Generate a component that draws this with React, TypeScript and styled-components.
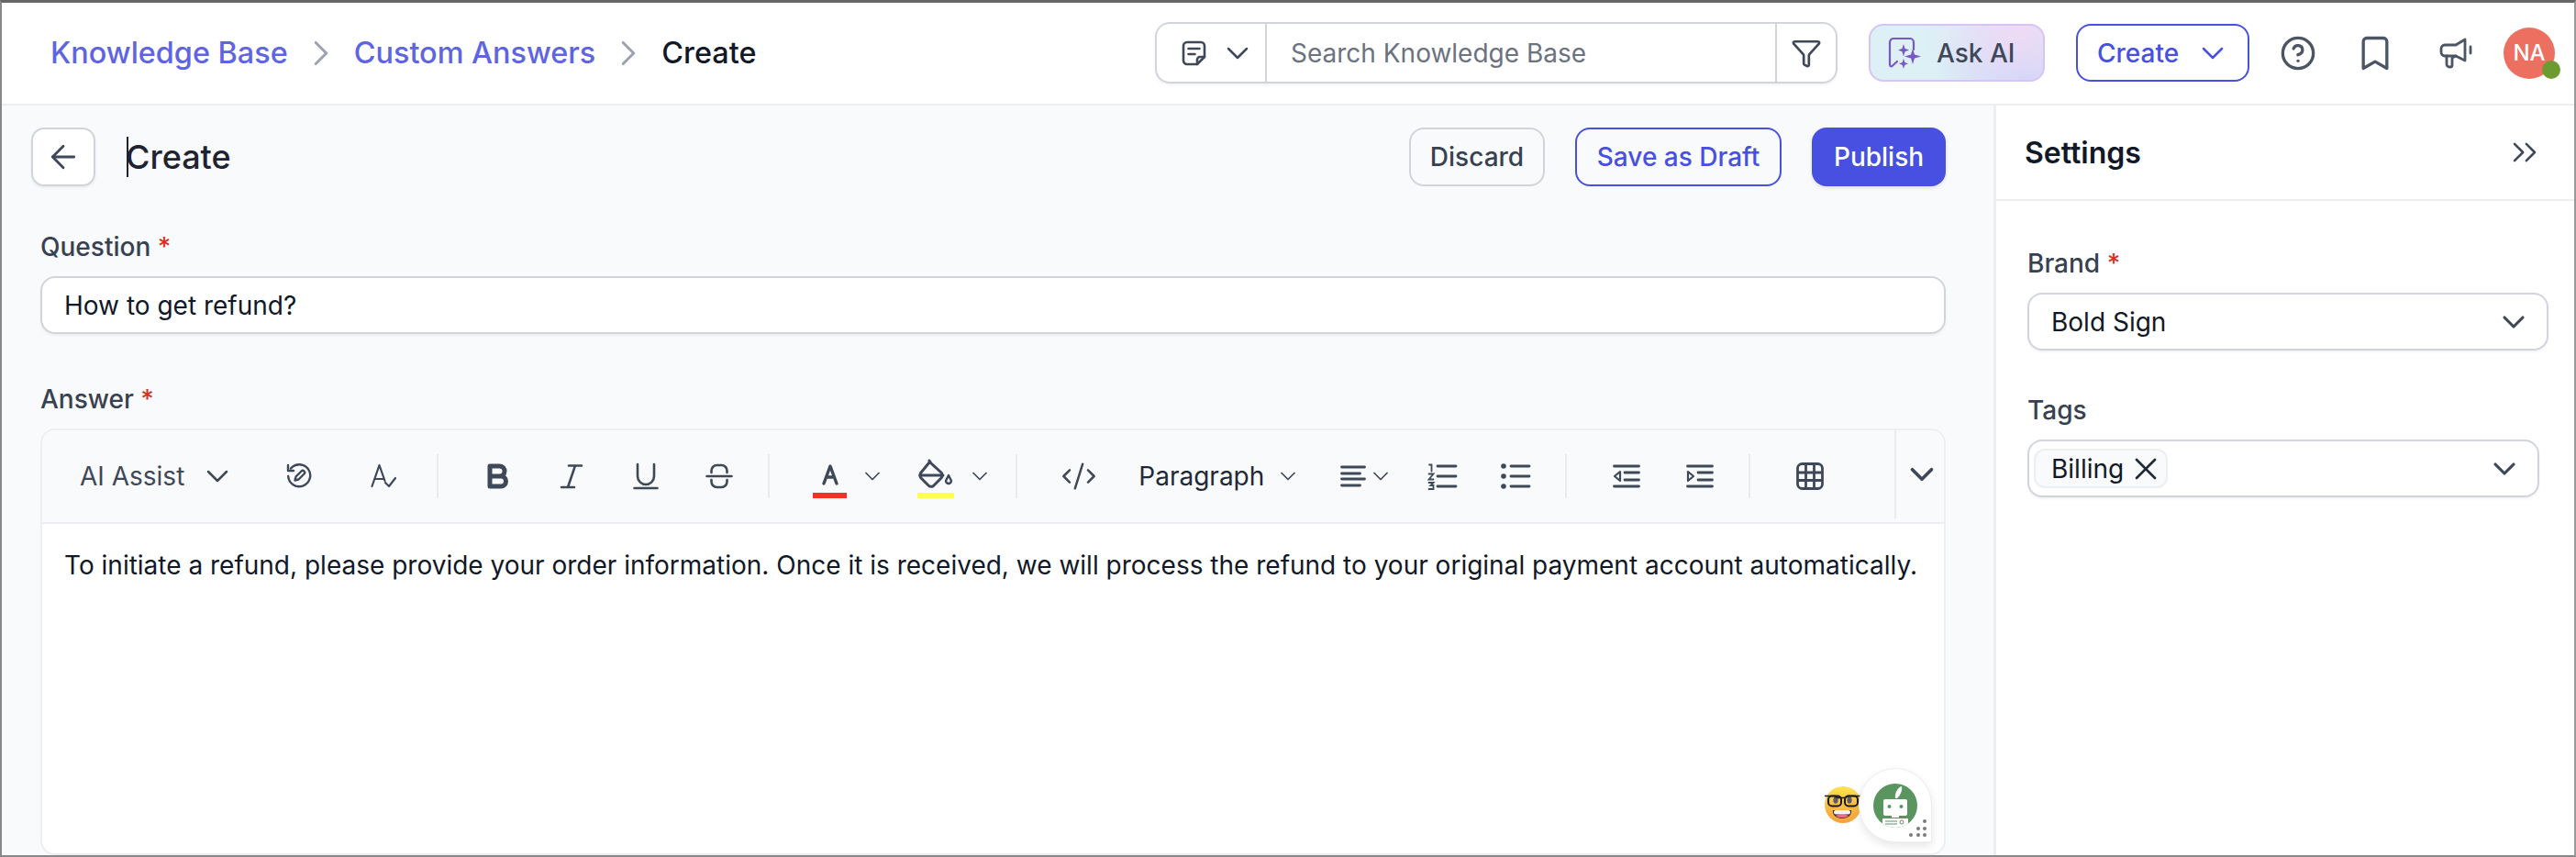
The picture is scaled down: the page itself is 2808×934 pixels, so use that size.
import styled, { createGlobalStyle } from 'styled-components';
import { ArrowLeft, ChevronDown, ChevronRight, ChevronsRight, CircleHelp, Bookmark, Funnel, X, CodeXml } from 'lucide-react';

const INK = '#3f4859';

const GlobalStyle = createGlobalStyle`
  html, body {
    margin: 0;
    padding: 0;
    width: 2808px;
    height: 934px;
    overflow: hidden;
    background: #fff;
    font-family: Inter, "Noto Sans", sans-serif;
    color: #111827;
  }
  * { box-sizing: border-box; }
`;

function NoteIcon() {
  return (
    <svg width="27" height="28" viewBox="0 0 27 28" fill="none" stroke={INK} strokeWidth="2.6" strokeLinecap="round" strokeLinejoin="round">
      <path d="M17 26H6a4 4 0 0 1-4-4V6a4 4 0 0 1 4-4h15a4 4 0 0 1 4 4v12z" />
      <path d="M25 18h-5a3 3 0 0 0-3 3v5" />
      <path d="M7.5 9h12M7.5 15h7" />
    </svg>
  );
}

function AskAiIcon() {
  return (
    <svg width="36" height="36" viewBox="0 0 36 36" fill="none" stroke="#7a57c8" strokeWidth="2.2" strokeLinecap="round" strokeLinejoin="round">
      <path d="M10 27l-5.500 5a1.500 1.500 0 0 1-2.500-1V6a4 4 0 0 1 4-4h18a4 4 0 0 1 4 4v8" />
      <path fill="#7a57c8" stroke="none" d="M17 8l1.600 5 4.400 1.600-4.400 1.600-1.600 5-1.600-5-4.400-1.600 4.400-1.600z" />
      <path fill="#7a57c8" stroke="none" d="M27 13l2 6.500 7 2-7 2-2 6.500-2-6.500-7-2 7-2z" />
      <path fill="#7a57c8" stroke="none" d="M17 24l1.400 4 3.600 1.400-3.600 1.400-1.400 4-1.400-4-3.600-1.400 3.600-1.400z" />
    </svg>
  );
}

function MegaphoneIcon() {
  return (
    <svg width="36" height="34" viewBox="0 0 36 34" fill="none" stroke="#4b5563" strokeWidth="2.8" strokeLinecap="round" strokeLinejoin="round">
      <path d="M6 8h12l10-6v23l-10-5H6a4 4 0 0 1-4-4v-4a4 4 0 0 1 4-4z" />
      <path d="M8 20v9a3 3 0 0 0 3 3h1a2 2 0 0 0 2-2v-8l4-2" />
      <path d="M34 10v7" />
    </svg>
  );
}

function HistoryIcon() {
  return (
    <svg width="28" height="28" viewBox="0 0 28 28" fill="none" stroke={INK} strokeWidth="2.4" strokeLinecap="round" strokeLinejoin="round">
      <path d="M5 5.500A12 12 0 1 1 2.200 14" />
      <path d="M2 2v6h6" />
      <path d="M9.500 18.500l1-4 6-6a2 2 0 0 1 3 3l-6 6z" />
    </svg>
  );
}

function SpellIcon() {
  return (
    <svg width="28" height="28" viewBox="0 0 28 28" fill="none" stroke={INK} strokeWidth="2.200" strokeLinecap="round" strokeLinejoin="round">
      <path d="M1.500 25L9.500 2l6 17M4.500 17h9" />
      <path d="M16 21l4 4 7-9" />
    </svg>
  );
}

function BoldIcon() {
  return (
    <svg width="26" height="28" viewBox="0 0 26 28" fill="none" stroke={INK} strokeWidth="5" strokeLinejoin="round">
      <path d="M3 3h10.500a5.500 5.500 0 0 1 0 11H3zM3 14h12a5.500 5.500 0 0 1 0 11H3z" />
    </svg>
  );
}

function ItalicIcon() {
  return (
    <svg width="26" height="28" viewBox="0 0 26 28" fill="none" stroke={INK} strokeWidth="2.600" strokeLinecap="round">
      <path d="M10 2.500h14M2 26h14M17 2.500L9 26" />
    </svg>
  );
}

function UnderlineIcon() {
  return (
    <svg width="28" height="30" viewBox="0 0 28 30" fill="none" stroke={INK} strokeWidth="2.600" strokeLinecap="round">
      <path d="M5 2v13a9 9 0 0 0 18 0V2" />
      <path d="M1.500 28h25" />
    </svg>
  );
}

function StrikeIcon() {
  return (
    <svg width="30" height="28" viewBox="0 0 30 28" fill="none" stroke={INK} strokeWidth="2.600" strokeLinecap="round">
      <path d="M6.500 10V8a6 6 0 0 1 6-6h5a6 6 0 0 1 6 6v2" />
      <path d="M1.500 14h27" />
      <path d="M6.500 18v2a6 6 0 0 0 6 6h5a6 6 0 0 0 6-6v-2" />
    </svg>
  );
}

function FontColorIcon() {
  return (
    <svg width="28" height="32" viewBox="0 0 28 32" fill="none" stroke={INK} strokeWidth="3.400" strokeLinecap="round" strokeLinejoin="round">
      <path d="M7 27L14 8l7 19M9.500 20h9" />
    </svg>
  );
}

function BucketIcon() {
  return (
    <svg width="38" height="32" viewBox="0 0 38 32" fill="none" stroke={INK} strokeWidth="3" strokeLinecap="round" strokeLinejoin="round">
      <path d="M12 2l2 3 11 10a5 5 0 0 1 0 6l-8 8a4 4 0 0 1-6 0l-8-8a5 5 0 0 1 0-6l9-11" />
      <path d="M2 18h25" />
      <path d="M33 18l3 6a3 3 0 0 1-6 0z" strokeWidth="2.400" />
    </svg>
  );
}

function AlignIcon() {
  return (
    <svg width="28" height="28" viewBox="0 0 28 28" fill="none" stroke={INK} strokeWidth="2.800" strokeLinecap="round">
      <path d="M1.500 4h25M1.500 11h20M1.500 17h25M1.500 24h20" />
    </svg>
  );
}

function NumberedIcon() {
  return (
    <svg width="33" height="30" viewBox="0 0 33 30" fill="none" stroke={INK} strokeLinecap="round">
      <path d="M11 4h20M11 15h20M11 26h20" strokeWidth="2.800" />
      <path d="M2 2.500h2.500v7M1.500 12.500h5l-5 6h5M1.500 22h5l-3 3h3v4h-5" strokeWidth="1.800" />
    </svg>
  );
}

function BulletIcon() {
  return (
    <svg width="33" height="30" viewBox="0 0 33 30" fill="none" stroke={INK} strokeLinecap="round">
      <path d="M11 4h20M11 15h20M11 26h20" strokeWidth="2.800" />
      <circle cx="3" cy="4" r="2.800" fill={INK} stroke="none" />
      <circle cx="3" cy="15" r="2.800" fill={INK} stroke="none" />
      <circle cx="3" cy="26" r="2.800" fill={INK} stroke="none" />
    </svg>
  );
}

function OutdentIcon() {
  return (
    <svg width="30" height="30" viewBox="0 0 30 30" fill="none" stroke={INK} strokeWidth="2.800" strokeLinecap="round" strokeLinejoin="round">
      <path d="M1.500 4h27M13 11h15.500M13 19h15.500M1.500 26h27" />
      <path d="M8 10l-6 5 6 5z" strokeWidth="2.200" />
    </svg>
  );
}

function IndentIcon() {
  return (
    <svg width="30" height="30" viewBox="0 0 30 30" fill="none" stroke={INK} strokeWidth="2.800" strokeLinecap="round" strokeLinejoin="round">
      <path d="M1.500 4h27M13 11h15.500M13 19h15.500M1.500 26h27" />
      <path d="M2 10l6 5-6 5z" strokeWidth="2.200" />
    </svg>
  );
}

function TableIcon() {
  return (
    <svg width="30" height="30" viewBox="0 0 30 30" fill="none" stroke={INK} strokeWidth="2.800" strokeLinejoin="round">
      <rect x="1.500" y="1.500" width="27" height="27" rx="5" />
      <path d="M1.500 11h27M1.500 19.500h27M10.500 1.500v27M19.500 1.500v27" />
    </svg>
  );
}

function NerdEmoji() {
  return (
    <svg width="42" height="42" viewBox="0 0 42 42">
      <defs>
        <linearGradient id="nerdFace" x1="0" y1="0" x2="0" y2="1">
          <stop offset="0" stopColor="#fde24f" />
          <stop offset="1" stopColor="#f3a13a" />
        </linearGradient>
      </defs>
      <circle cx="21" cy="21" r="20" fill="url(#nerdFace)" />
      <ellipse cx="13" cy="16" rx="2.600" ry="3.800" fill="#5c5a66" />
      <ellipse cx="28" cy="16" rx="2.600" ry="3.800" fill="#5c5a66" />
      <path d="M1 11.500h11l3 2h8l4-2h13" fill="none" stroke="#1c1a1a" strokeWidth="1.600" />
      <rect x="5" y="11.500" width="14" height="11" rx="4" fill="none" stroke="#1c1a1a" strokeWidth="2" />
      <rect x="23" y="11.500" width="14" height="11" rx="4" fill="none" stroke="#1c1a1a" strokeWidth="2" />
      <path d="M10 27h20c1 5-4 9-10 9s-11-4-10-9z" fill="#3d2422" />
      <path d="M13 33c3-2 11-2 14 0-3 3-11 3-14 0z" fill="#ef6b85" />
      <rect x="11" y="27" width="18" height="4.500" rx="2" fill="#f1f3f5" />
    </svg>
  );
}

function RobotAvatar() {
  return (
    <svg width="48" height="48" viewBox="0 0 48 48">
      <defs>
        <clipPath id="robotClip">
          <circle cx="24" cy="24" r="24" />
        </clipPath>
      </defs>
      <g clipPath="url(#robotClip)">
        <rect width="48" height="48" fill="#5a9560" />
        <path d="M24 16c-1-6 3-12 7-13 1 5-2 10-5 13z" fill="#fff" />
        <rect x="11" y="17" width="26" height="18" rx="2" fill="#fff" />
        <circle cx="17.500" cy="25" r="2" fill="#5a9560" />
        <circle cx="30.500" cy="25" r="2" fill="#5a9560" />
        <rect x="20" y="35" width="8" height="2" fill="#fff" />
        <rect x="10" y="38" width="28" height="12" fill="#fff" />
        <path d="M13 41h13M13 44h13" stroke="#5a9560" strokeWidth="1" />
        <circle cx="31" cy="42" r="2" fill="none" stroke="#5a9560" strokeWidth="1" />
      </g>
    </svg>
  );
}

export default function App() {
  return (
    <>
      <GlobalStyle />
      <Page>
        <TopBar>
          <Breadcrumb>
            <CrumbLink>Knowledge Base</CrumbLink>
            <CrumbSep><ChevronRight size={46} strokeWidth={1.6} /></CrumbSep>
            <CrumbLink>Custom Answers</CrumbLink>
            <CrumbSep><ChevronRight size={46} strokeWidth={1.6} /></CrumbSep>
            <CrumbCurrent>Create</CrumbCurrent>
          </Breadcrumb>

          <SearchBox>
            <SearchScope>
              <NoteIcon />
              <ChevronDown size={40} strokeWidth={1.5} color={INK} />
            </SearchScope>
            <SearchText>Search Knowledge Base</SearchText>
            <SearchFilter><Funnel size={34} strokeWidth={1.9} color={INK} /></SearchFilter>
          </SearchBox>

          <AskAiButton>
            <AskAiIcon />
            Ask AI
          </AskAiButton>
          <CreateButton>
            Create
            <ChevronDown size={40} strokeWidth={1.5} />
          </CreateButton>

          <TopIcon $ml={33}><CircleHelp size={40} strokeWidth={2} color="#4b5563" /></TopIcon>
          <TopIcon $ml={42}><Bookmark size={44} strokeWidth={1.8} color="#4b5563" /></TopIcon>
          <TopIcon $ml={48}><MegaphoneIcon /></TopIcon>
          <Avatar>
            NA
            <StatusDot />
          </Avatar>
        </TopBar>

        <Body>
          <Main>
            <TitleRow>
              <BackButton><ArrowLeft size={40} strokeWidth={1.7} color={INK} /></BackButton>
              <TitleText>Create</TitleText>
              <Actions>
                <GhostButton>Discard</GhostButton>
                <OutlineButton>Save as Draft</OutlineButton>
                <PrimaryButton>Publish</PrimaryButton>
              </Actions>
            </TitleRow>

            <Form>
              <FieldLabel $top={50}>Question <Required>*</Required></FieldLabel>
              <TextInput>How to get refund?</TextInput>
              <FieldLabel $top={55}>Answer <Required>*</Required></FieldLabel>

              <Editor>
                <Toolbar>
                  <Tool $ml={41}>
                    <ToolLabel>AI Assist</ToolLabel>
                    <ChevronMark $ml={16}><ChevronDown size={40} strokeWidth={1.5} color={INK} /></ChevronMark>
                  </Tool>
                  <Tool $ml={55}><HistoryIcon /></Tool>
                  <Tool $ml={64}><SpellIcon /></Tool>
                  <ToolDivider $ml={44} />
                  <Tool $ml={53}><BoldIcon /></Tool>
                  <Tool $ml={53}><ItalicIcon /></Tool>
                  <Tool $ml={53.5}><UnderlineIcon /></Tool>
                  <Tool $ml={51}><StrikeIcon /></Tool>
                  <ToolDivider $ml={38} />
                  <Tool $ml={47.5}>
                    <ColorStack>
                      <FontColorIcon />
                      <Swatch $color="#ef3224" $width={37} />
                    </ColorStack>
                    <ChevronMark $ml={14}><ChevronDown size={28} strokeWidth={1.5} color={INK} /></ChevronMark>
                  </Tool>
                  <Tool $ml={35}>
                    <ColorStack>
                      <BucketIcon />
                      <Swatch $color="#ffff4d" $width={40} />
                    </ColorStack>
                    <ChevronMark $ml={13.5}><ChevronDown size={28} strokeWidth={1.5} color={INK} /></ChevronMark>
                  </Tool>
                  <ToolDivider $ml={25.5} />
                  <Tool $ml={46.5}><CodeXml size={40} strokeWidth={1.5} color={INK} /></Tool>
                  <Tool $ml={45.5}>
                    <ToolLabel $dark>Paragraph</ToolLabel>
                    <ChevronMark $ml={12}><ChevronDown size={28} strokeWidth={1.5} color={INK} /></ChevronMark>
                  </Tool>
                  <Tool $ml={43}>
                    <AlignIcon />
                    <ChevronMark $ml={1.5}><ChevronDown size={28} strokeWidth={1.5} color={INK} /></ChevronMark>
                  </Tool>
                  <Tool $ml={37.5}><NumberedIcon /></Tool>
                  <Tool $ml={47}><BulletIcon /></Tool>
                  <ToolDivider $ml={37} />
                  <Tool $ml={50}><OutdentIcon /></Tool>
                  <Tool $ml={50}><IndentIcon /></Tool>
                  <ToolDivider $ml={38} />
                  <Tool $ml={50}><TableIcon /></Tool>
                  <OverflowTool><ChevronDown size={42} strokeWidth={2.1} color={INK} /></OverflowTool>
                </Toolbar>
                <EditorBody>
                  To initiate a refund, please provide your order information. Once it is received, we will process the refund to your original payment account automatically.
                </EditorBody>
                <EmojiBadge><NerdEmoji /></EmojiBadge>
                <BotBubble>
                  <RobotAvatar />
                  <BotDots>
                    {[0, 1, 2, 3, 4, 5, 6, 7, 8].map((i) => (
                      <BotDot key={i} $on={i === 2 || i === 4 || i === 5 || i > 5} />
                    ))}
                  </BotDots>
                </BotBubble>
              </Editor>
            </Form>
          </Main>

          <Sidebar>
            <SidebarHeader>
              <SidebarTitle>Settings</SidebarTitle>
              <ChevronsRight size={44} strokeWidth={1.4} color={INK} />
            </SidebarHeader>
            <SidebarForm>
              <FieldLabel $top={52}>Brand <Required>*</Required></FieldLabel>
              <SelectBox>
                <SelectValue>Bold Sign</SelectValue>
                <ChevronDown size={40} strokeWidth={1.9} color={INK} />
              </SelectBox>
              <FieldLabel $top={49}>Tags</FieldLabel>
              <SelectBox $narrow>
                <TagChip>
                  Billing
                  <X size={40} strokeWidth={1.6} color="#1f2937" />
                </TagChip>
                <ChevronDown size={40} strokeWidth={1.9} color={INK} />
              </SelectBox>
            </SidebarForm>
          </Sidebar>
        </Body>
      </Page>
    </>
  );
}

const Page = styled.div`
  width: 2808px;
  height: 934px;
  display: flex;
  flex-direction: column;
  overflow: hidden;
  border-top: 3px solid #666;
  border-left: 2px solid #888;
  border-right: 2px solid #999;
  border-bottom: 2px solid #888;
`;

const TopBar = styled.header`
  flex: none;
  height: 112px;
  display: flex;
  align-items: center;
  background: #fff;
  border-bottom: 2px solid #eceef2;
  padding-bottom: 1px;
`;

const Breadcrumb = styled.nav`
  display: flex;
  align-items: center;
  margin-left: 53px;
  width: 1204px;
  font-size: 32.4px;
  font-weight: 500;
`;

const CrumbLink = styled.span`
  color: #5e64e2;
`;

const CrumbCurrent = styled.span`
  color: #111827;
`;

const CrumbSep = styled.span`
  display: flex;
  margin: 0 13px;
  color: #9ca3af;
`;

const SearchBox = styled.div`
  width: 744px;
  height: 67px;
  display: flex;
  align-items: stretch;
  background: #fff;
  border: 2px solid #d1d5db;
  border-radius: 16px;
  box-shadow: 0 2px 3px rgba(17, 24, 39, 0.05);
`;

const SearchScope = styled.div`
  width: 120px;
  display: flex;
  align-items: center;
  gap: 14px;
  padding-left: 27px;
  border-right: 2px solid #d1d5db;
`;

const SearchText = styled.div`
  flex: 1;
  display: flex;
  align-items: center;
  padding-left: 26px;
  font-size: 28px;
  color: #6b7280;
`;

const SearchFilter = styled.div`
  width: 66px;
  display: flex;
  align-items: center;
  justify-content: center;
  border-left: 2px solid #d1d5db;
`;

const AskAiButton = styled.div`
  width: 192px;
  height: 63px;
  margin-left: 34px;
  display: flex;
  align-items: center;
  gap: 17px;
  padding-left: 19px;
  font-size: 28px;
  font-weight: 500;
  color: #3f4859;
  border: 2px solid #d8c3f5;
  border-radius: 16px;
  background:
    radial-gradient(circle at 85% 0%, #f0daf4 0%, rgba(240, 218, 244, 0) 60%),
    radial-gradient(circle at 90% 100%, #c4d2fb 0%, rgba(196, 210, 251, 0) 55%),
    #dcf0f6;
`;

const CreateButton = styled.div`
  width: 189px;
  height: 63px;
  margin-left: 34px;
  display: flex;
  align-items: center;
  gap: 17px;
  padding-left: 21px;
  font-size: 28px;
  font-weight: 500;
  color: #4750e0;
  background: #fff;
  border: 2px solid #4750e0;
  border-radius: 16px;
`;

const TopIcon = styled.span<{ $ml: number }>`
  flex: none;
  display: flex;
  margin-left: ${(props) => props.$ml}px;
`;

const Avatar = styled.div`
  position: relative;
  width: 56px;
  height: 56px;
  margin-left: 34px;
  display: flex;
  align-items: center;
  justify-content: center;
  border-radius: 50%;
  background: #ec6f5f;
  color: #fff;
  font-size: 24px;
  font-weight: 500;
`;

const StatusDot = styled.span`
  position: absolute;
  right: -6px;
  bottom: 0;
  width: 20px;
  height: 20px;
  border-radius: 50%;
  background: #6e9b2f;
`;

const Body = styled.div`
  flex: 1;
  min-height: 0;
  display: flex;
`;

const Main = styled.main`
  width: 2174px;
  flex: none;
  display: flex;
  flex-direction: column;
  background: #f9fafb;
  border-right: 3px solid #eceef2;
`;

const TitleRow = styled.div`
  display: flex;
  align-items: center;
  padding: 24px 52px 0 32px;
`;

const BackButton = styled.div`
  width: 70px;
  height: 64px;
  display: flex;
  align-items: center;
  justify-content: center;
  background: #fff;
  border: 2px solid #d1d5db;
  border-radius: 14px;
  box-shadow: 0 2px 3px rgba(17, 24, 39, 0.06);
`;

const TitleText = styled.div`
  margin-left: 34px;
  height: 44px;
  line-height: 44px;
  font-size: 36px;
  font-weight: 500;
  text-indent: -3px;
  color: #1f2230;
  border-left: 2px solid #1f2230;
`;

const Actions = styled.div`
  margin-left: auto;
  display: flex;
  gap: 33px;
`;

const BaseButton = styled.div`
  height: 64px;
  display: flex;
  align-items: center;
  justify-content: center;
  font-size: 28px;
  font-weight: 500;
  border-radius: 16px;
`;

const GhostButton = styled(BaseButton)`
  width: 148px;
  color: #374151;
  border: 2px solid #d1d5db;
`;

const OutlineButton = styled(BaseButton)`
  width: 225px;
  color: #4750e0;
  border: 2px solid #4750e0;
`;

const PrimaryButton = styled(BaseButton)`
  width: 146px;
  color: #fff;
  background: #4750e0;
  box-shadow: 0 2px 4px rgba(17, 24, 39, 0.1);
`;

const Form = styled.div`
  flex: 1;
  min-height: 0;
  display: flex;
  flex-direction: column;
  padding: 0 52px 0 42px;
`;

const FieldLabel = styled.div<{ $top: number }>`
  margin-top: ${(props) => props.$top}px;
  height: 32px;
  line-height: 32px;
  font-size: 28px;
  font-weight: 500;
  color: #374151;
`;

const Required = styled.span`
  color: #d5321f;
`;

const TextInput = styled.div`
  margin-top: 16px;
  height: 63px;
  display: flex;
  align-items: center;
  padding-left: 24px;
  font-size: 28px;
  color: #111827;
  background: #fff;
  border: 2px solid #d1d5db;
  border-radius: 16px;
  box-shadow: 0 2px 3px rgba(17, 24, 39, 0.05);
`;

const Editor = styled.div`
  position: relative;
  flex: 1;
  min-height: 0;
  margin-top: 16px;
  display: flex;
  flex-direction: column;
  background: #fff;
  border: 2px solid #eceef2;
  border-radius: 16px;
`;

const Toolbar = styled.div`
  flex: none;
  height: 102px;
  display: flex;
  align-items: center;
  background: #f9fafb;
  border-bottom: 2px solid #eceef2;
  border-radius: 14px 14px 0 0;
`;

const Tool = styled.div<{ $ml: number }>`
  flex: none;
  display: flex;
  align-items: center;
  margin-left: ${(props) => props.$ml}px;
`;

const ToolLabel = styled.span<{ $dark?: boolean }>`
  font-size: 28px;
  color: ${(props) => (props.$dark ? '#1f2937' : INK)};
`;

const ChevronMark = styled.span<{ $ml: number }>`
  display: flex;
  margin-left: ${(props) => props.$ml}px;
`;

const ToolDivider = styled.span<{ $ml: number }>`
  flex: none;
  width: 2px;
  height: 48px;
  margin-left: ${(props) => props.$ml}px;
  background: #e9ebef;
`;

const ColorStack = styled.div`
  display: flex;
  flex-direction: column;
  align-items: center;
  gap: 5px;
  padding-top: 5px;
`;

const Swatch = styled.span<{ $color: string; $width: number }>`
  width: ${(props) => props.$width}px;
  height: 6px;
  background: ${(props) => props.$color};
`;

const OverflowTool = styled.div`
  margin-left: auto;
  align-self: stretch;
  width: 54px;
  display: flex;
  align-items: center;
  justify-content: center;
  padding-left: 3px;
  border-left: 2px solid #e9ebef;
  margin-bottom: 4px;
`;

const EditorBody = styled.div`
  padding: 27px 24px;
  font-size: 28px;
  line-height: 36px;
  color: #111827;
  white-space: nowrap;
`;

const EmojiBadge = styled.div`
  position: absolute;
  right: 89px;
  bottom: 32px;
  width: 42px;
  height: 42px;
`;

const BotBubble = styled.div`
  position: absolute;
  right: 13px;
  bottom: 12px;
  width: 80px;
  height: 81px;
  display: flex;
  align-items: center;
  justify-content: center;
  background: #fff;
  border: 1px solid #eceef2;
  border-radius: 50% 50% 0 50%;
  box-shadow: 0 4px 10px rgba(17, 24, 39, 0.1);
`;

const BotDots = styled.div`
  position: absolute;
  right: 5px;
  bottom: 5px;
  display: grid;
  grid-template-columns: repeat(3, 4px);
  gap: 3.3px;
`;

const BotDot = styled.span<{ $on: boolean }>`
  width: 4px;
  height: 4px;
  border-radius: 50%;
  background: ${(props) => (props.$on ? '#7b7b7b' : 'transparent')};
`;

const Sidebar = styled.aside`
  flex: 1;
  display: flex;
  flex-direction: column;
  background: #fff;
`;

const SidebarHeader = styled.div`
  flex: none;
  height: 104px;
  display: flex;
  align-items: center;
  justify-content: space-between;
  padding: 0 32px 0 31px;
  border-bottom: 2px solid #eceef2;
`;

const SidebarTitle = styled.div`
  font-size: 32px;
  font-weight: 600;
  color: #111827;
`;

const SidebarForm = styled.div`
  padding: 0 28px 0 34px;
`;

const SelectBox = styled.div<{ $narrow?: boolean }>`
  margin-top: 16px;
  width: ${(props) => (props.$narrow ? '558px' : '568px')};
  height: 63px;
  display: flex;
  align-items: center;
  justify-content: space-between;
  padding: 0 16px 0 5px;
  background: #fff;
  border: 2px solid #d1d5db;
  border-radius: 16px;
  box-shadow: 0 2px 3px rgba(17, 24, 39, 0.05);
`;

const SelectValue = styled.span`
  padding-left: 19px;
  font-size: 28px;
  color: #111827;
`;

const TagChip = styled.span`
  height: 43px;
  width: 146px;
  display: flex;
  align-items: center;
  gap: 4px;
  padding-left: 17px;
  font-size: 28px;
  color: #111827;
  background: #f9fafb;
  border: 2px solid #eceef2;
  border-radius: 12px;
`;
